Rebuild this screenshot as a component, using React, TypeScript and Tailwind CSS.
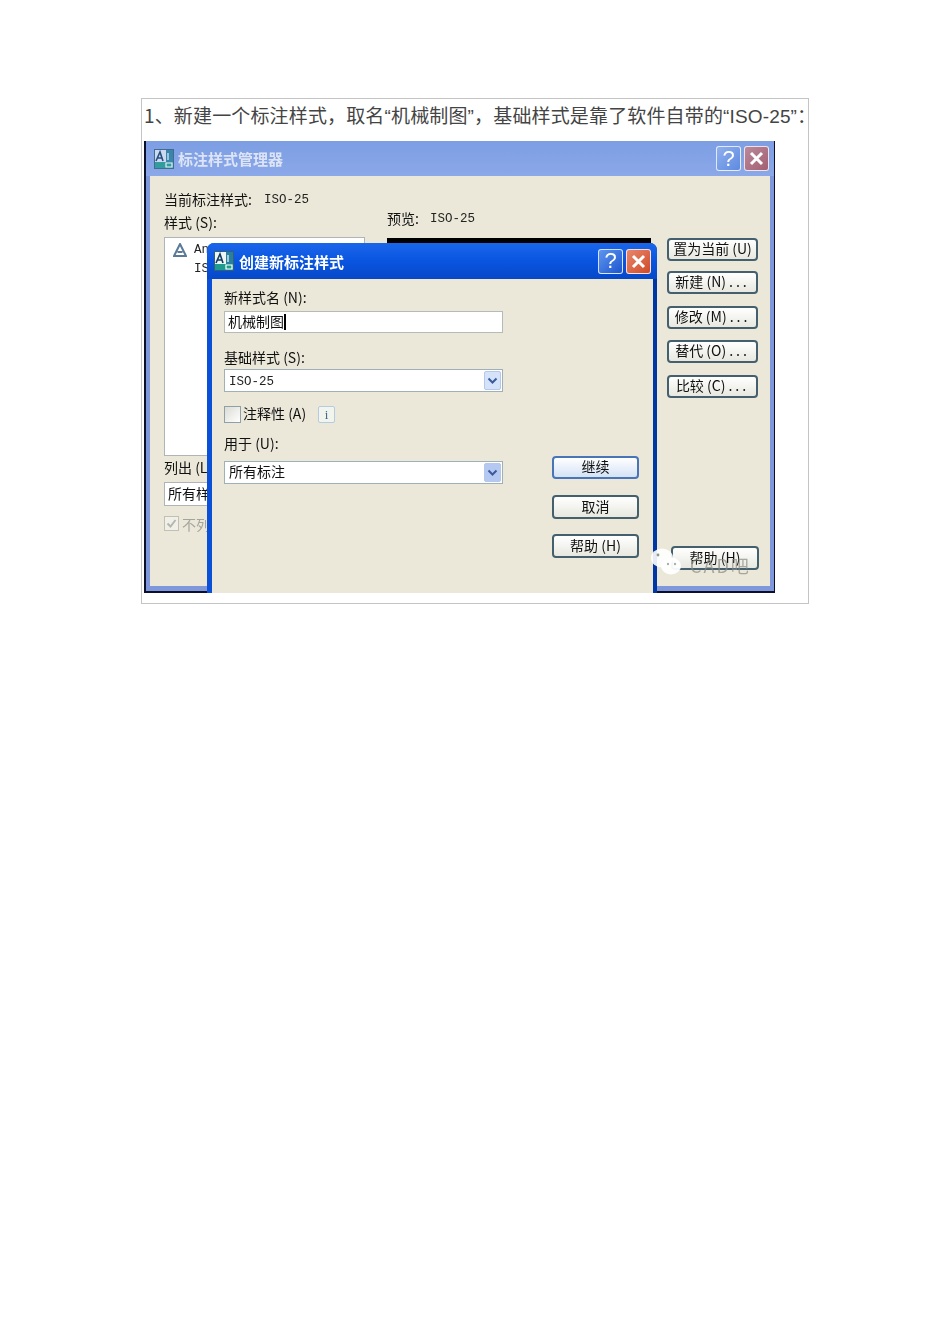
import React from 'react';

const cjk = "font-['Noto_Sans_CJK_SC','Noto_Sans',sans-serif]";
const mono = "font-['Liberation_Mono',monospace] text-[12.5px] leading-none text-[#222]";

const AppIcon = ({ dim }: { dim?: boolean }) => (
  <svg width="20" height="20" viewBox="0 0 20 20" className={dim ? 'opacity-80' : ''}>
    <rect x="0.5" y="0.5" width="19" height="19" fill={dim ? '#dfe8f5' : '#eef6f2'} stroke="#2f5f7a" />
    <rect x="1" y="13" width="18" height="6" fill="#1f9a8e" />
    <rect x="12" y="1" width="7" height="12" fill="#2a7f9e" />
    <path d="M2 12 L6 3 L9 12 M3.5 9 H8" fill="none" stroke="#123a66" strokeWidth="1.6" />
    <path d="M14 4 V11 M12 14 h6 v4 h-6 z" fill="none" stroke="#fff" strokeWidth="1.2" />
  </svg>
);

const HelpBtn = ({ faded }: { faded?: boolean }) => (
  <div
    className={`flex w-[25px] h-[25px] items-center justify-center rounded-[3px] border border-white/80 text-[22px] leading-none text-white font-['Liberation_Sans',sans-serif] ${
      faded ? 'bg-gradient-to-br from-[#8fb0ee] to-[#5f8ae0]' : 'bg-gradient-to-br from-[#5f95ee] to-[#1c55cf]'
    }`}
  >
    ?
  </div>
);

const CloseBtn = ({ faded }: { faded?: boolean }) => (
  <div
    className={`flex w-[25px] h-[25px] items-center justify-center rounded-[3px] border border-white/80 ${
      faded ? 'bg-gradient-to-br from-[#b88a9c] to-[#a45f72]' : 'bg-gradient-to-br from-[#e8866a] to-[#cf4a26]'
    }`}
  >
    <svg width="15" height="15" viewBox="0 0 15 15">
      <path d="M2 2 L13 13 M13 2 L2 13" stroke="#fff" strokeWidth="3" />
    </svg>
  </div>
);

const XpButton = ({
  children,
  className = '',
  focus,
}: {
  children: React.ReactNode;
  className?: string;
  focus?: boolean;
}) => (
  <div
    className={`flex items-center justify-center rounded-[4px] border-2 pb-[3px] text-[14px] leading-none text-[#111] whitespace-nowrap ${cjk} ${
      focus
        ? 'border-[#4a74b8] bg-gradient-to-b from-[#ffffff] to-[#d4e2f6]'
        : 'border-[#44606e] bg-gradient-to-b from-[#ffffff] to-[#e8e8e0]'
    } ${className}`}
  >
    {children}
  </div>
);

const Dots = () => <span className="ml-[3px] tracking-[3px]">...</span>;

const XpSelect = ({ value, isMono, dark }: { value: string; isMono?: boolean; dark?: boolean }) => (
  <div className="flex h-[23px] w-[279px] items-center justify-between border border-[#9fb0b8] bg-white pl-[4px] pr-[1px]">
    <span className={isMono ? `${mono} mt-[3px]` : `${cjk} pb-[3px] text-[14px] leading-none text-[#111]`}>{value}</span>
    <div
      className={`flex h-[19px] w-[17px] items-center justify-center rounded-[2px] border border-[#b5c8ea] ${
        dark ? 'bg-[#b4c8f2]' : 'bg-[#d4e2fa]'
      }`}
    >
      <svg width="11" height="8" viewBox="0 0 11 8">
        <path d="M1.5 1.5 L5.5 5.5 L9.5 1.5" fill="none" stroke="#3a5a9a" strokeWidth="2" />
      </svg>
    </div>
  </div>
);

const Label = ({ children, className = '' }: { children: React.ReactNode; className?: string }) => (
  <div className={`h-[18px] text-[14px] leading-[16px] text-[#111] whitespace-nowrap ${cjk} ${className}`}>{children}</div>
);

// the dialog in front
const NewStyleDialog = () => (
  <div className="absolute left-[63px] top-[102px] flex h-[350px] w-[450px] flex-col overflow-hidden rounded-t-[7px] bg-gradient-to-r from-[#0a50d8] to-[#0036a4]">
    <div className="flex h-[36px] shrink-0 items-center bg-gradient-to-b from-[#1a66ea] via-[#0a55e0] to-[#0648c8] pl-[7px] pr-[6px]">
      <AppIcon />
      <span className={`ml-[5px] pt-[3px] text-[15px] font-bold text-white ${cjk}`}>创建新标注样式</span>
      <div className="ml-auto flex gap-[3px]">
        <HelpBtn />
        <CloseBtn />
      </div>
    </div>
    <div className="ml-[5px] mr-[4px] flex flex-1 bg-[#ebe8da] pl-[12px]">
      <div className="w-[279px] pt-[10px]">
        <Label>新样式名 (N):</Label>
        <div className="mt-[4px] flex h-[22px] w-[279px] items-center border border-[#b4bcb8] bg-white pl-[3px]">
          <span className={`pb-[3px] text-[14px] leading-none text-[#111] ${cjk}`}>机械制图</span>
          <span className="h-[16px] w-[2px] bg-black" />
        </div>
        <Label className="mt-[16px]">基础样式 (S):</Label>
        <div className="mt-[2px]">
          <XpSelect value="ISO-25" isMono />
        </div>
        <div className="mt-[13px] flex h-[18px] items-center">
          <div className="h-[17px] w-[17px] border border-[#8fa0a8] bg-gradient-to-br from-[#dcdcd4] to-white" />
          <Label className="ml-[2px]">注释性 (A)</Label>
          <div className="ml-[12px] flex h-[17px] w-[17px] items-center justify-center rounded-[2px] border border-[#b4cce0] bg-[#f2f4ee] font-['Liberation_Serif',serif] text-[13px] leading-none text-[#3a6a8a]">
            i
          </div>
        </div>
        <Label className="mt-[12px]">用于 (U):</Label>
        <div className="mt-[8px]">
          <XpSelect value="所有标注" dark />
        </div>
      </div>
      <div className="ml-[49px] flex w-[87px] flex-col pt-[177px]">
        <XpButton focus className="h-[23px]">继续</XpButton>
        <XpButton className="mt-[16px] h-[24px]">取消</XpButton>
        <XpButton className="mt-[15px] h-[24px]">帮助 (H)</XpButton>
      </div>
    </div>
  </div>
);

// the manager window behind it, washed out
const ManagerWindow = () => (
  <div className="relative flex h-[452px] w-[631px] flex-col overflow-hidden bg-[#0c0f2a] pb-[2px] pl-[2px] pr-[1px] blur-[0.4px]">
    <div className="flex h-[35px] shrink-0 items-center bg-gradient-to-b from-[#7d9ee4] to-[#8ba8e8] pl-[8px] pr-[5px]">
      <AppIcon dim />
      <span className={`ml-[4px] pt-[2px] text-[15px] font-bold text-[#dce4f6] ${cjk}`}>标注样式管理器</span>
      <div className="ml-auto flex gap-[3px]">
        <HelpBtn faded />
        <CloseBtn faded />
      </div>
    </div>
    <div className="flex flex-1 border-x-[4px] border-b-[5px] border-[#7f98dc] bg-[#ebe8da] pl-[14px]">
      <div className="w-[201px] pt-[15px]">
        <div className="flex items-center whitespace-nowrap">
          <Label>当前标注样式:</Label>
          <span className={`ml-[12px] ${mono}`}>ISO-25</span>
        </div>
        <Label className="mt-[5px]">样式 (S):</Label>
        <div className="mt-[5px] h-[219px] w-[201px] border border-[#aeb4b8] bg-white pl-[8px] pt-[5px]">
          <div className="flex items-center">
            <svg width="14" height="14" viewBox="0 0 14 14">
              <path d="M7 1 L13 13 H1 Z M4.5 9 H9.5" fill="none" stroke="#5a7a9a" strokeWidth="2" />
            </svg>
            <span className={`ml-[7px] ${mono}`}>An</span>
          </div>
          <div className={`ml-[21px] mt-[6px] ${mono}`}>IS</div>
        </div>
        <Label className="mt-[3px]">列出 (L):</Label>
        <div className={`mt-[5px] flex h-[24px] items-center border border-[#aeb4b8] bg-white pb-[3px] pl-[3px] text-[14px] leading-none text-[#111] ${cjk}`}>
          所有样式
        </div>
        <div className="mt-[10px] flex items-center">
          <div className="flex h-[15px] w-[15px] items-center justify-center border border-[#c0c0b4] bg-[#f0f0e8]">
            <svg width="11" height="11" viewBox="0 0 11 11">
              <path d="M1.5 5.5 L4.5 8.5 L9.5 2" fill="none" stroke="#b4b8ac" strokeWidth="2" />
            </svg>
          </div>
          <span className={`ml-[3px] text-[14px] leading-none text-[#a4a49c] whitespace-nowrap ${cjk}`}>不列出外部参照中的样式</span>
        </div>
      </div>
      <div className="ml-[22px] w-[264px] pt-[34px]">
        <div className="flex items-center whitespace-nowrap">
          <Label>预览:</Label>
          <span className={`ml-[11px] ${mono}`}>ISO-25</span>
        </div>
        <div className="mt-[10px] h-[20px] w-[264px] bg-black" />
      </div>
      <div className="ml-[16px] flex w-[92px] flex-col pt-[62px]">
        <XpButton className="h-[23px] w-[91px]">置为当前 (U)</XpButton>
        <XpButton className="mt-[10px] h-[23px] w-[91px]">新建 (N)<Dots /></XpButton>
        <XpButton className="mt-[12px] h-[23px] w-[91px]">修改 (M)<Dots /></XpButton>
        <XpButton className="mt-[11px] h-[23px] w-[91px]">替代 (O)<Dots /></XpButton>
        <XpButton className="mt-[12px] h-[23px] w-[91px]">比较 (C)<Dots /></XpButton>
        <XpButton className="ml-[4px] mt-[148px] h-[24px] w-[88px]">帮助 (H)</XpButton>
      </div>
    </div>
    <NewStyleDialog />
    {/* watermark */}
    <div className="absolute left-[506px] top-[406px] flex items-center">
      <svg width="32" height="30" viewBox="0 0 32 30">
        <ellipse cx="12" cy="11" rx="11" ry="9.5" fill="#fff" opacity="0.9" />
        <ellipse cx="21" cy="19" rx="10" ry="8.5" fill="#fff" opacity="0.95" />
        <circle cx="8" cy="8" r="1.4" fill="#8a9a8a" />
        <circle cx="18" cy="17" r="1.2" fill="#a8b4a8" />
        <circle cx="25" cy="17" r="1.2" fill="#a8b4a8" />
      </svg>
      <span className={`ml-[8px] mt-[6px] text-[18px] leading-none tracking-[2px] text-[#8a8a80]/70 ${cjk}`}>CAD吧</span>
    </div>
  </div>
);

export default function App() {
  return (
    <div className="min-h-[1344px] w-[950px] bg-white pl-[141px] pt-[98px]">
      <div className="h-[506px] w-[668px] border border-[#c4c4c4] pl-[2px] pt-[4px]">
        <p className={`h-[38px] whitespace-nowrap text-[19px] leading-[24px] tracking-[0.15px] text-[#444] ${cjk}`}>
          1、新建一个标注样式，取名<span className="font-['Liberation_Sans',sans-serif]">“</span>机械制图<span className="font-['Liberation_Sans',sans-serif]">”</span>，基础样式是靠了软件自带的<span className="font-['Liberation_Sans',sans-serif]">“ISO-25”</span>：
        </p>
        <ManagerWindow />
      </div>
    </div>
  );
}
